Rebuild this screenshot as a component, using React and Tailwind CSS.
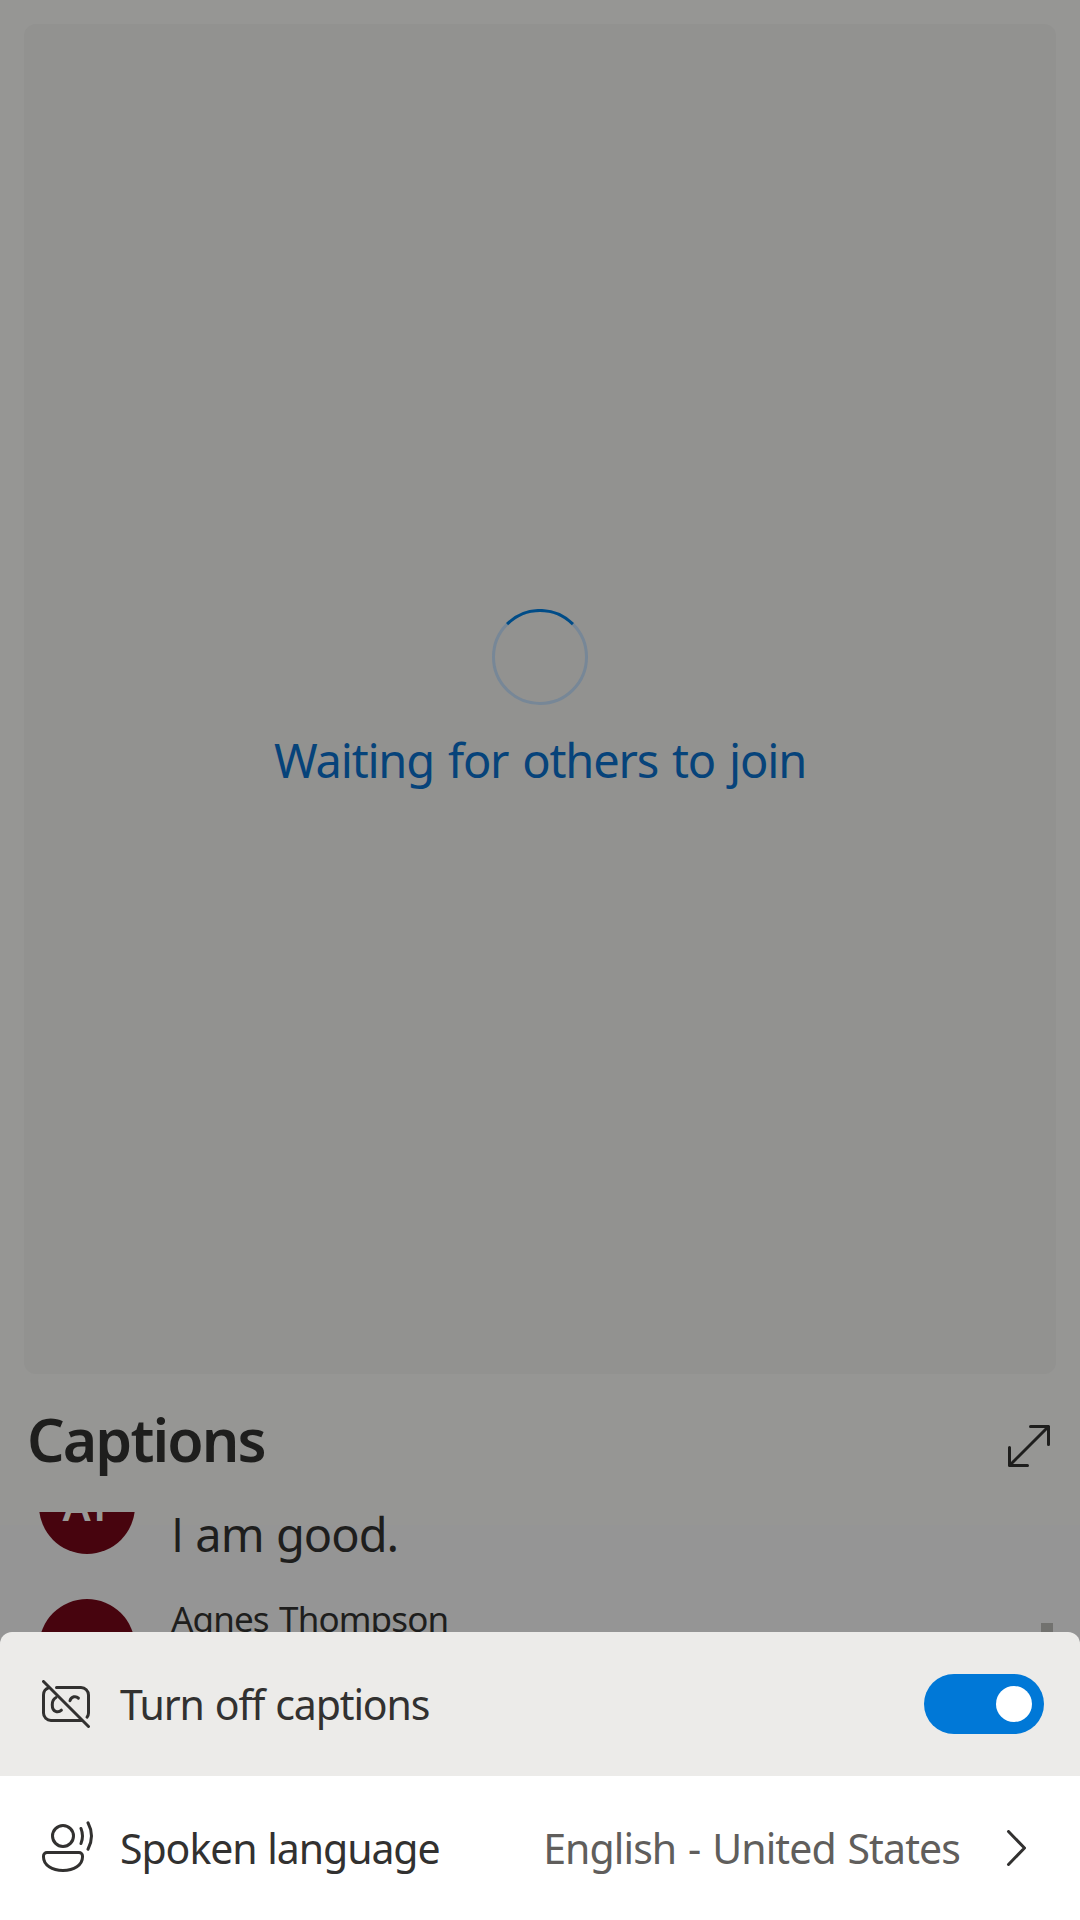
function Spinner() {
  return (
    <svg className="h-24 w-24" viewBox="0 0 96 96" fill="none" strokeWidth="3">
      <circle cx="48" cy="48" r="46.5" stroke="#778797" />
      <path d="M15.1 15.1A46.5 46.5 0 0 1 80.9 15.1" stroke="#004c87" />
    </svg>
  );
}

function ExpandIcon() {
  return (
    <svg className="h-[42px] w-[42px]" viewBox="0 0 42 42" fill="none" stroke="#1e1e1d" strokeWidth="3" strokeLinecap="round" strokeLinejoin="round">
      <path d="M22.5 1.5h18v18M40.5 1.5l-39 39M1.5 22.5v18h18" />
    </svg>
  );
}

function CaptionsOffIcon() {
  return (
    <svg className="h-12 w-[54px]" viewBox="0 0 54 48" fill="none" stroke="#323130" strokeWidth="3" strokeLinecap="round">
      <path d="M1.5 1.5l45 45" />
      <path d="M14.5 7.5H39a7.5 7.5 0 0 1 7.5 7.5v18c0 1.7-.5 3-1.5 4.2" />
      <path d="M6.5 7.9A7.5 7.5 0 0 0 1.5 15v18A7.5 7.5 0 0 0 9 40.5h30.5" />
      <path d="M14 17.5C9 20 9.200 29.500 13.600 31.400q3.200 1.300 5.800-1.200" />
      <path d="M28 20.700c1.300-4.500 6-5 8.400-2.600" />
    </svg>
  );
}

function SpokenLanguageIcon() {
  return (
    <svg className="h-[54px] w-[54px]" viewBox="0 0 54 54" fill="none" stroke="#323130" strokeWidth="3" strokeLinecap="round">
      <circle cx="21" cy="15" r="10.5" />
      <path d="M5 31.5h32a3.5 3.5 0 0 1 3.5 3.5v1C40.5 44 32 49.5 21 49.5S1.5 44 1.5 36v-1A3.5 3.5 0 0 1 5 31.5Z" />
      <path d="M39 7.5q3 7.500 0 15M46 1.800q7 13.200 0 26.400" />
    </svg>
  );
}

function Avatar({ initials }) {
  return (
    <div className="flex h-24 w-24 shrink-0 items-center justify-center rounded-full bg-[#47040e] pb-[3px] text-[42px] font-semibold leading-none text-[#999997]">
      {initials}
    </div>
  );
}

export default function App() {
  return (
    <div className="flex h-[1920px] w-[1080px] flex-col overflow-hidden bg-[#969694] font-['Noto_Sans',sans-serif]">
      <main className="mx-6 mt-6 flex h-[1350px] shrink-0 flex-col items-center rounded-xl bg-[#929290] pt-[585px]">
        <Spinner />
        <p className="mt-[23px] whitespace-nowrap text-[47px] leading-[64px] tracking-[-1.2px] text-[#06437a] [word-spacing:3px]">Waiting for others to join</p>
      </main>

      <header className="flex h-[138px] shrink-0 items-start justify-between pl-[27px] pr-[30px] pt-[25px]">
        <h1 className="text-[59px] font-semibold leading-[80px] tracking-[-1.9px] text-[#1e1e1d]">Captions</h1>
        <div className="pt-[26px]"><ExpandIcon /></div>
      </header>

      <section className="relative flex h-[120px] shrink-0 flex-col overflow-hidden bg-[linear-gradient(#969694_13px,#959595_13px)] pl-[39px] text-[#1e1e1d]">
        <div className="-mt-[54px] flex h-24 shrink-0 gap-9">
          <Avatar initials="AT" />
          <p className="whitespace-nowrap pt-[44px] text-[47px] leading-[64px] tracking-[-1px] [word-spacing:1px]"><span className="font-['Open_Sans',sans-serif]">I</span> am good.</p>
        </div>
        <div className="mt-[45px] flex h-24 shrink-0 gap-9">
          <Avatar initials="AT" />
          <p className="-mt-[4px] whitespace-nowrap text-[35px] leading-[48px] tracking-[-0.85px] [word-spacing:2px]">Agnes Thompson</p>
        </div>
        <div className="absolute right-[27px] bottom-0 h-[9px] w-3 bg-[#72726f]" />
      </section>

      <div className="flex shrink-0 flex-col bg-[#959595]">
        <div className="flex h-36 items-center rounded-t-xl bg-[#ecebe9] pl-[42px] pr-9">
          <CaptionsOffIcon />
          <span className="ml-6 whitespace-nowrap text-[41px] leading-[56px] tracking-[-1.15px] text-[#323130] [word-spacing:1.5px]">Turn off captions</span>
          <div className="ml-auto flex h-[60px] w-[120px] items-center justify-end rounded-full bg-[#0078d7] pr-3">
            <div className="h-9 w-9 rounded-full bg-white" />
          </div>
        </div>
        <div className="flex h-36 items-center bg-white pl-[42px] pr-[54px]">
          <SpokenLanguageIcon />
          <span className="ml-6 whitespace-nowrap text-[41px] leading-[56px] tracking-[-1.05px] text-[#323130] [word-spacing:1px]">Spoken language</span>
          <span className="ml-auto whitespace-nowrap text-[41px] leading-[56px] tracking-[-0.9px] text-[#605e5c] [word-spacing:2px]">English - United States</span>
          <svg className="ml-[46px] h-9 w-5" viewBox="0 0 20 36" fill="none" stroke="#323130" strokeWidth="3" strokeLinecap="round" strokeLinejoin="round">
            <path d="M2.5 1.5L18.5 18L2.5 34.5" />
          </svg>
        </div>
      </div>
    </div>
  );
}
